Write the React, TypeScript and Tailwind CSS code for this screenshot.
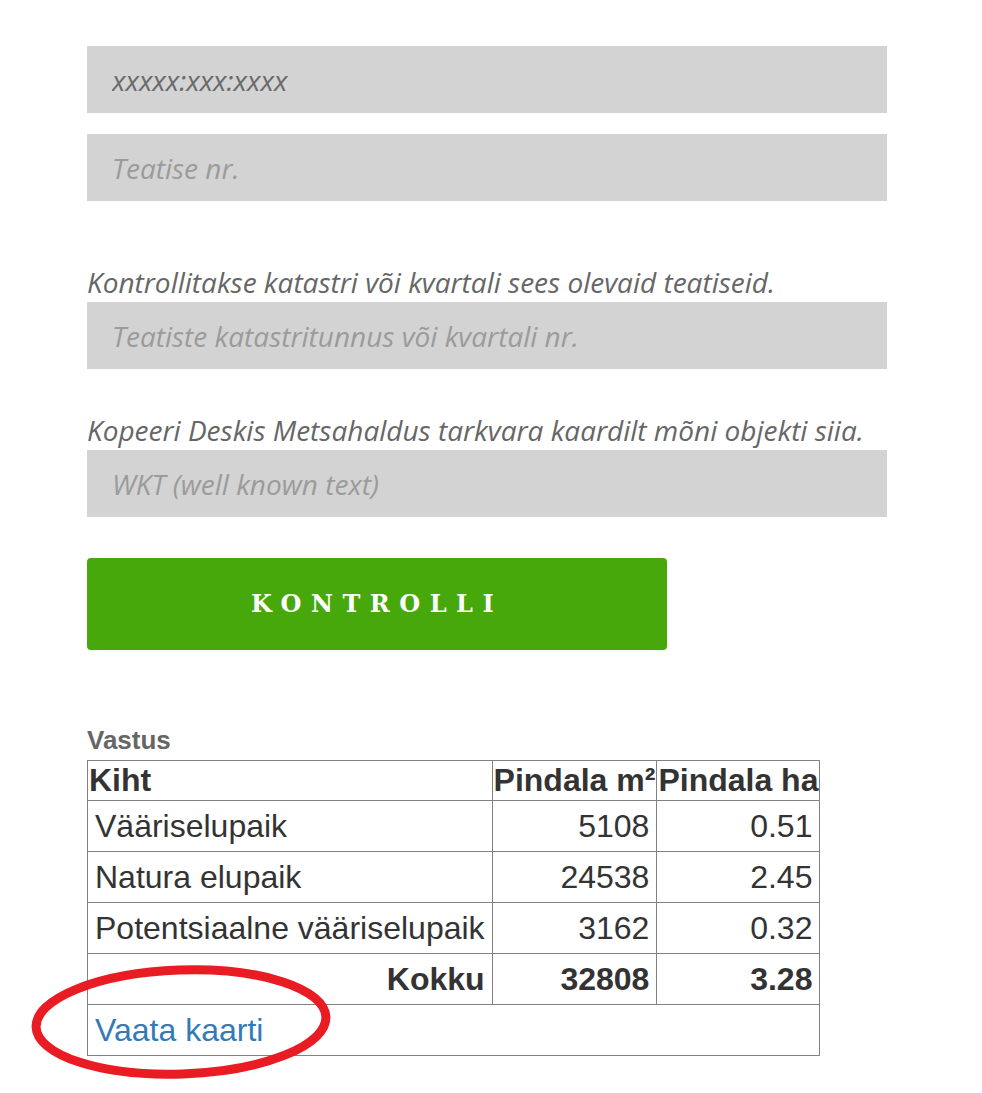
import React from "react";

export default function App() {
  return (
    <div className="relative min-h-[1093px] w-[982px] bg-white">
      <div className="pl-[87px] pt-[46px]">
        <div className="w-[800px] font-['Open_Sans',sans-serif] italic">
          <input
            readOnly
            value="xxxxx:xxx:xxxx"
            className="block h-[67px] w-full bg-[#d3d3d3] pl-[25px] text-[28px] text-[#6a6a6a] italic outline-none"
          />
          <input
            readOnly
            placeholder="Teatise nr."
            className="mt-[21px] block h-[67px] w-full bg-[#d3d3d3] pl-[25px] text-[28px] italic text-[#666] outline-none placeholder:text-[#9b9b9b]"
          />
          <div className="mt-[61px] text-[28px] leading-[40px] text-[#666]">
            Kontrollitakse katastri või kvartali sees olevaid teatiseid.
          </div>
          <input
            readOnly
            placeholder="Teatiste katastritunnus või kvartali nr."
            className="block h-[67px] w-full bg-[#d3d3d3] pl-[25px] text-[28px] italic text-[#666] outline-none placeholder:text-[#9b9b9b]"
          />
          <div className="mt-[41px] text-[28px] leading-[40px] text-[#666]">
            Kopeeri Deskis Metsahaldus tarkvara kaardilt mõni objekti siia.
          </div>
          <input
            readOnly
            placeholder="WKT (well known text)"
            className="block h-[67px] w-full bg-[#d3d3d3] pl-[25px] text-[28px] italic text-[#666] outline-none placeholder:text-[#9b9b9b]"
          />
        </div>
        <button className="mt-[41px] flex h-[92px] w-[580px] items-center justify-center rounded-[4px] bg-[#46a80a] font-['DejaVu_Serif',serif] text-[24px] font-bold tracking-[9.5px] text-white">
          KONTROLLI
        </button>
        <div className="mt-[75px] font-['Liberation_Sans',Arial,sans-serif] text-[26px] font-bold leading-[30px] text-[#666]">
          Vastus
        </div>
        <table className="mt-[5px] border-collapse border border-[#828282] font-['Liberation_Sans',Arial,sans-serif] text-[32px] leading-[37px] text-[#333]">
          <thead>
            <tr>
              <th className="border border-[#828282] p-[1px] text-left font-bold">Kiht</th>
              <th className="border border-[#828282] p-[1px] font-bold">Pindala m²</th>
              <th className="border border-[#828282] p-[1px] font-bold">Pindala ha</th>
            </tr>
          </thead>
          <tbody>
            {[
              ["Vääriselupaik", "5108", "0.51"],
              ["Natura elupaik", "24538", "2.45"],
              ["Potentsiaalne vääriselupaik", "3162", "0.32"],
            ].map((r) => (
              <tr key={r[0]}>
                <td className="border border-[#828282] px-[7px] pt-[7px] pb-[6px]">{r[0]}</td>
                <td className="border border-[#828282] px-[7px] pt-[7px] pb-[6px] text-right">{r[1]}</td>
                <td className="border border-[#828282] px-[7px] pt-[7px] pb-[6px] text-right">{r[2]}</td>
              </tr>
            ))}
            <tr>
              <td className="border border-[#828282] px-[7px] pt-[7px] pb-[6px] text-right font-bold">Kokku</td>
              <td className="border border-[#828282] px-[7px] pt-[7px] pb-[6px] text-right font-bold">32808</td>
              <td className="border border-[#828282] px-[7px] pt-[7px] pb-[6px] text-right font-bold">3.28</td>
            </tr>
            <tr>
              <td colSpan={3} className="border border-[#828282] px-[7px] pt-[7px] pb-[6px]">
                <a href="#" className="text-[#337ab7]">Vaata kaarti</a>
              </td>
            </tr>
          </tbody>
        </table>
      </div>
      <svg
        className="pointer-events-none absolute left-0 top-0"
        width="982"
        height="1093"
        viewBox="0 0 982 1093"
      >
        <ellipse
          cx="181"
          cy="1022"
          rx="145"
          ry="52"
          fill="none"
          stroke="#e91c24"
          strokeWidth="9"
          transform="rotate(-2 181 1022)"
        />
      </svg>
    </div>
  );
}
